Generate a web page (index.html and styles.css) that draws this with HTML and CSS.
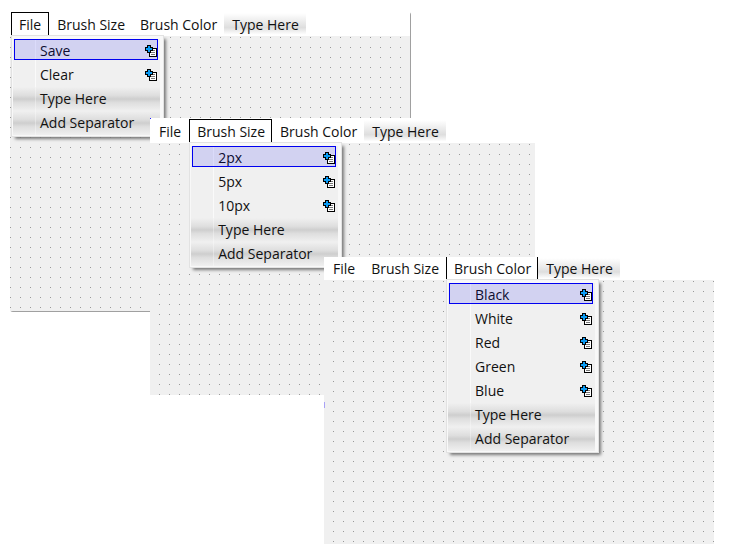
FILE: index.html
```html
<!DOCTYPE html>
<html lang="en">
<head>
<meta charset="utf-8">
<title>Menu designer</title>
<link rel="stylesheet" href="styles.css">
</head>
<body>
<svg class="symbols" aria-hidden="true">
  <symbol id="action" viewBox="0 0 12 12" shape-rendering="crispEdges">
    <path fill="#000" d="M4 3h8v9H4z"/>
    <path fill="#fff" d="M5 4h6v7H5z"/>
    <path fill="#777" d="M7 5h3v1H7zM6 7h4v1H6zM6 9h4v1H6z"/>
    <path fill="#000" d="M2 0h4v2h2v4H6v2H2V6H0V2h2z"/>
    <path fill="#0a9bf5" d="M3 1h2v2h2v2H5v2H3V5H1V3h2z"/>
  </symbol>
</svg>
<main class="desktop">
  <section class="window window-file" aria-label="File menu">
    <ul class="bar">
      <li class="open"><button class="title">File</button>
        <ul class="menu">
          <li><button class="entry selected">Save<svg class="icon"><use href="#action"/></svg></button></li>
          <li><button class="entry">Clear<svg class="icon"><use href="#action"/></svg></button></li>
          <li><button class="entry placeholder">Type Here</button></li>
          <li><button class="entry placeholder">Add Separator</button></li>
        </ul>
      </li>
      <li><button class="title">Brush Size</button></li>
      <li><button class="title">Brush Color</button></li>
      <li><button class="title new">Type Here</button></li>
    </ul>
    <div class="canvas"></div>
  </section>

  <section class="window window-size" aria-label="Brush Size menu">
    <ul class="bar">
      <li><button class="title">File</button></li>
      <li class="open"><button class="title">Brush Size</button>
        <ul class="menu">
          <li><button class="entry selected">2px<svg class="icon"><use href="#action"/></svg></button></li>
          <li><button class="entry">5px<svg class="icon"><use href="#action"/></svg></button></li>
          <li><button class="entry">10px<svg class="icon"><use href="#action"/></svg></button></li>
          <li><button class="entry placeholder">Type Here</button></li>
          <li><button class="entry placeholder">Add Separator</button></li>
        </ul>
      </li>
      <li><button class="title">Brush Color</button></li>
      <li><button class="title new">Type Here</button></li>
    </ul>
    <div class="canvas"></div>
  </section>

  <section class="window window-color" aria-label="Brush Color menu">
    <ul class="bar">
      <li><button class="title">File</button></li>
      <li><button class="title">Brush Size</button></li>
      <li class="open"><button class="title">Brush Color</button>
        <ul class="menu">
          <li><button class="entry selected">Black<svg class="icon"><use href="#action"/></svg></button></li>
          <li><button class="entry">White<svg class="icon"><use href="#action"/></svg></button></li>
          <li><button class="entry">Red<svg class="icon"><use href="#action"/></svg></button></li>
          <li><button class="entry">Green<svg class="icon"><use href="#action"/></svg></button></li>
          <li><button class="entry">Blue<svg class="icon"><use href="#action"/></svg></button></li>
          <li><button class="entry placeholder">Type Here</button></li>
          <li><button class="entry placeholder">Add Separator</button></li>
        </ul>
      </li>
      <li><button class="title new">Type Here</button></li>
    </ul>
    <div class="canvas"></div>
  </section>
</main>
</body>
</html>
```
FILE: styles.css
```css
* { box-sizing: border-box; }

body {
  margin: 0;
  background: #fff;
  color: #111;
  font: 14px/20px "Open Sans", "Noto Sans", sans-serif;
}

ul { list-style: none; margin: 0; padding: 0; }

button {
  margin: 0;
  border: 0;
  background: none;
  color: inherit;
  font: inherit;
  white-space: nowrap;
}

.symbols { position: absolute; width: 0; height: 0; }

.desktop { position: relative; min-height: 100vh; }

/* Designer windows, cascaded over the desktop */
.window { position: absolute; z-index: 0; display: flex; flex-direction: column; }
.window-file {
  inset: 12px 318px 244px 10px;
  border-right: 1px solid #a0a0a0;
  border-bottom: 1px solid #a0a0a0;
  border-radius: 3px;
}
.window-size { inset: 118px 194px 161px 150px; }
.window-color { inset: 257px 15px 12px 324px; }

/* Edge of a selection frame that shows beside the window */
.window-size::before,
.window-color::before { content: ""; position: absolute; z-index: 1; left: 0; width: 1px; background: #22f; }
.window-size::before { top: 0; height: 1px; }
.window-color::before { top: 145px; height: 6px; background: #a9a2f6; }

.canvas {
  flex: 1;
  background: conic-gradient(from 0deg at 1px 1px, #f0f0f0 75%, #999 0) 0 0 / 10px 10px;
}
.window-file .canvas { background-position: 0 1px; }
.window-size .canvas { background-position: 9px 1px; }
.window-color .canvas { background-position: 9px 1px; }

/* Menu bar */
.bar { display: flex; height: 24px; padding: 0 1px; background: #fff; }
.bar > li { position: relative; height: 23px; }
.title { display: block; height: 100%; padding: 2px 7px 0 8px; }
.bar > li:first-child > .title { padding-right: 8px; }
.open > .title { padding: 1px 6px 0 7px; border: solid #000; border-width: 1px 1px 0; }
.bar > .open:first-child > .title { padding-right: 7px; }
.title.new { background: linear-gradient(#fff 5%, #f2f2f2 30%, #dedede 68%, #fff 98%); }

.window-size .bar { height: 25px; padding-top: 1px; }
.window-color .bar { height: 23px; }
.window-color .bar > li { height: 22px; }
.window-color .title { padding-top: 1px; }
.window-color .open > .title { border-top: 0; }

/* Drop-down menu */
.menu {
  position: absolute;
  z-index: 1;
  top: 100%;
  left: 0;
  width: 153px;
  padding: 3px 3px 1px 1px;
  border: 1px solid #e2e2e2;
  background: #f8f8f8;
  box-shadow: 3px 3px 3px -1px #777;
}
.entry {
  position: relative;
  display: flex;
  align-items: center;
  justify-content: space-between;
  width: 100%;
  height: 24px;
  padding: 0 3px 0 27px;
  background: #f0f0f0;
  background-image: linear-gradient(#fafafa, #fafafa);
  background-position: 22px 0;
  background-size: 1px 100%;
  background-repeat: no-repeat;
}
.entry.placeholder {
  background-image: linear-gradient(#fff5, #fff5), linear-gradient(#f0f0f0, #dedede 35%, #cecece 50%, #dedede 65%, #f0f0f0);
  background-size: 1px 100%, 100% 100%;
  background-position: 22px 0, 0 0;
}
.entry.selected::before {
  content: "";
  position: absolute;
  inset: 0 2px 3px 1px;
  border: 1px solid #0000f0;
  background: #0000ff1f;
}
.icon { position: relative; width: 12px; height: 12px; }
```
